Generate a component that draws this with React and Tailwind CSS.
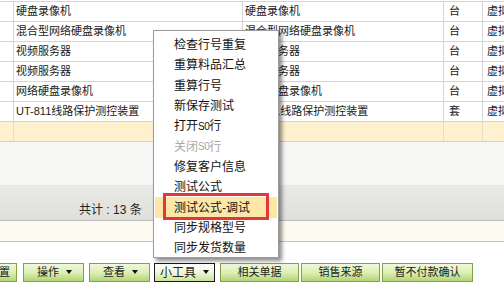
import React from 'react';

const rows = [
  { name: '硬盘录像机', spec: '硬盘录像机', unit: '台' },
  { name: '混合型网络硬盘录像机', spec: '混合型网络硬盘录像机', unit: '台' },
  { name: '视频服务器', spec: '视频服务器', unit: '台' },
  { name: '视频服务器', spec: '视频服务器', unit: '台' },
  { name: '网络硬盘录像机', spec: '网络硬盘录像机', unit: '台' },
  { name: 'UT-811线路保护测控装置', spec: 'UT-811线路保护测控装置', unit: '套' },
];

const menu = [
  { label: '检查行号重复' },
  { label: '重算料品汇总' },
  { label: '重算行号' },
  { label: '新保存测试' },
  { label: '打开', s0: true },
  { label: '关闭', s0: true, disabled: true },
  { label: '修复客户信息' },
  { label: '测试公式' },
  { label: '测试公式-调试', active: true },
  { label: '同步规格型号' },
  { label: '同步发货数量' },
];

const Arrow = () => (
  <span className="inline-block w-0 h-0 border-l-[3px] border-r-[3px] border-t-[4px] border-l-transparent border-r-transparent border-t-[#111] ml-[7px] mb-[2px]" />
);

const Btn = ({ children, w, active, className = '' }) => (
  <div
    className={`h-[19px] flex items-center justify-center shrink-0 border text-[11px] text-[#222] bg-gradient-to-b ${
      active
        ? 'border-[#1a1a1a] from-[#ffffff] via-[#eef7d8] to-[#c9e29a]'
        : 'border-[#86a04a] from-[#f0f8dc] via-[#dcefb4] to-[#b3d476]'
    } ${w} ${className}`}
  >
    {children}
  </div>
);

export default function App() {
  return (
    <div
      className="relative w-[504px] h-[295px] overflow-hidden bg-white"
      style={{ fontFamily: '"Liberation Sans", "Noto Sans CJK SC", sans-serif' }}
    >
      {/* 明细表格 */}
      <div className="h-[1px] bg-white" />
      <div className="border-t border-[#d4d4d4] w-[560px]">
        {rows.map((r, i) => (
          <div key={i} className="flex h-[20px] border-b border-[#d4d4d4] text-[11px] text-[#1a1a1a] leading-[19px]">
            <div className="w-[14px] border-r border-[#d4d4d4]" />
            <div className="w-[229px] border-r border-[#d4d4d4] pl-[2px] whitespace-nowrap overflow-hidden">{r.name}</div>
            <div className="w-[201px] border-r border-[#d4d4d4] pl-[2px] whitespace-nowrap overflow-hidden">{r.spec}</div>
            <div className="w-[39px] border-r border-[#d4d4d4] pl-[5px]">{r.unit}</div>
            <div className="flex-1 pl-[4px] whitespace-nowrap">虚拟</div>
          </div>
        ))}
        <div className="flex h-[20px] border-b border-[#cfcfcf] bg-[#fdf1cf]">
          <div className="w-[14px] border-r border-[#e6dcc0]" />
          <div className="w-[229px] border-r border-[#e6dcc0]" />
          <div className="w-[201px] border-r border-[#e6dcc0]" />
          <div className="w-[39px] border-r border-[#e6dcc0]" />
          <div className="flex-1" />
        </div>
      </div>
      <div className="h-[43px] bg-[#f6f6f4]" />
      {/* 合计栏 */}
      <div className="h-[36px] bg-gradient-to-b from-[#e9e9e6] to-[#dfdfdb] border-b border-[#bdbdbd] flex items-end pb-[1px]">
        <span className="pl-[79px] text-[12px] text-[#222]">共计 : 13 条</span>
      </div>
      <div className="h-[21px] bg-[#fdfbef] border-b border-[#c4c4c4]" />

      {/* 按钮栏 */}
      <div className="flex mt-[21px] ml-[-19px] gap-[5px]">
        <Btn w="w-[36px]" className="justify-start pl-[6px]">设置</Btn>
        <Btn w="w-[61px]" className="ml-[1px]">
          <span className="pl-[2px]">操作</span>
          <Arrow />
        </Btn>
        <Btn w="w-[61px]">
          <span className="pl-[2px]">查看</span>
          <Arrow />
        </Btn>
        <Btn w="w-[61px]" active className="ml-[-1px] text-[12px]">
          <span>小工具</span>
          <Arrow />
        </Btn>
        <Btn w="w-[79px]">相关单据</Btn>
        <Btn w="w-[79px]" className="ml-[-3px]">销售来源</Btn>
        <Btn w="w-[91px]" className="ml-[-3px]">暂不付款确认</Btn>
      </div>

      {/* 小工具下拉菜单 */}
      <div className="absolute left-[153px] top-[30px] w-[126px] h-[228px] bg-white border border-[#9c9c9c] shadow-[3px_3px_4px_rgba(0,0,0,0.45)] px-[1px] pt-[4px]">
        {menu.map((m, i) => (
          <div
            key={i}
            className={`relative h-[20.3px] flex items-center pl-[19px] text-[12px] whitespace-nowrap ${
              m.disabled ? 'text-[#a8a8a8]' : 'text-[#111]'
            } ${m.active ? 'bg-[#fde7a6]' : ''}`}
          >
            {m.label}
            {m.s0 && (
              <>
                <span className="text-[10px] tracking-[-0.5px]">S0</span>
                <span>行</span>
              </>
            )}
            {m.active && (
              <div className="absolute left-[8px] right-[8px] top-[-4px] bottom-[-2px] border-[3px] border-[#e0373a]" />
            )}
          </div>
        ))}
      </div>
    </div>
  );
}
